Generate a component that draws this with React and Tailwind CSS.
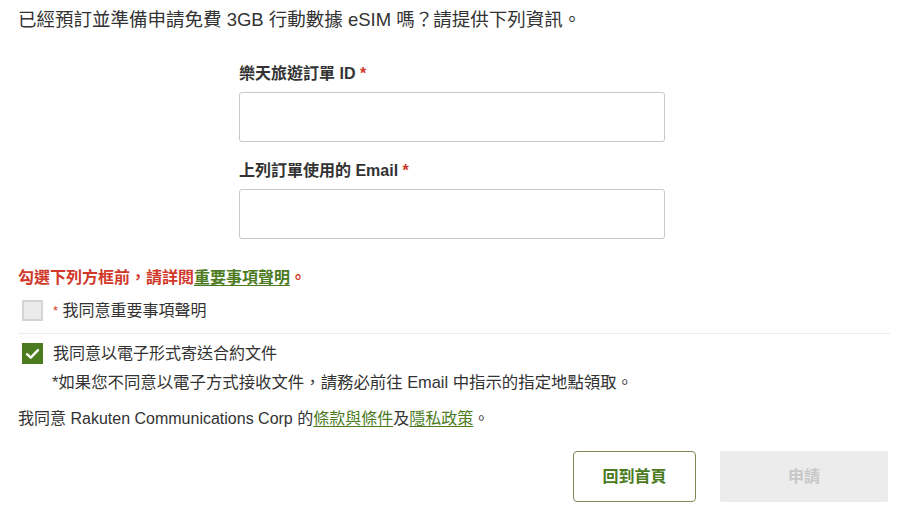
import React, { useState } from 'react'

const font = { fontFamily: '"Liberation Sans", "Noto Sans CJK TC", sans-serif' }

function Field({ label, id }) {
    return (
        <div className="mb-[19px]">
            <label htmlFor={id} className="block text-[16px] font-bold text-[#333] leading-[20px] mb-[8px]">
                {label} <span className="text-[#d0382a]">*</span>
            </label>
            <input
                id={id}
                type="text"
                className="block w-[426px] h-[50px] border border-[#c8c8c8] rounded-[3px] px-3 text-[15px] focus:outline-none"
            />
        </div>
    )
}

function Box({ checked, onClick }) {
    return (
        <button
            onClick={onClick}
            className={
                checked
                    ? 'w-[21px] h-[21px] shrink-0 bg-[#4c7b1f] flex items-center justify-center'
                    : 'w-[21px] h-[21px] shrink-0 bg-[#ebebeb] border-2 border-[#d4d4d4]'
            }
        >
            {checked && (
                <svg width="15" height="12" viewBox="0 0 15 12">
                    <path d="M2 6.2 L5.7 9.6 L13 2.2" fill="none" stroke="#fff" strokeWidth="2.4" strokeLinecap="round" strokeLinejoin="round" />
                </svg>
            )}
        </button>
    )
}

export default function App() {
    const [agree1, setAgree1] = useState(false)
    const [agree2, setAgree2] = useState(true)

    return (
        <div className="w-[900px] h-[510px] bg-white text-[#333] pl-[18px] pr-[12px] pt-[8px]" style={font}>
            <p className="text-[18.5px] leading-[24px]">
                已經預訂並準備申請免費 3GB 行動數據 eSIM 嗎？請提供下列資訊。
            </p>

            <div className="pl-[221px] pt-[32px]">
                <Field label="樂天旅遊訂單 ID" id="orderId" />
                <Field label="上列訂單使用的 Email" id="email" />
            </div>

            {/* margin collapses with the field's mb */}
            <p className="text-[16px] font-bold text-[#d0382a] leading-[20px] mt-[29px]">
                勾選下列方框前，請詳閱<a href="#" className="text-[#4c7b1f] underline underline-offset-2">重要事項聲明</a>。
            </p>

            <div className="flex items-center gap-[10px] pl-[4px] mt-[12px] pb-[12px] border-b border-[#ececec] mr-[-2px]">
                <Box checked={agree1} onClick={() => setAgree1(!agree1)} />
                <span className="text-[16px] leading-[20px]">
                    <span className="text-[#d0382a] text-[13px] align-top">*</span> 我同意重要事項聲明
                </span>
            </div>

            <div className="pl-[4px] pt-[9px]">
                <div className="flex items-center gap-[10px]">
                    <Box checked={agree2} onClick={() => setAgree2(!agree2)} />
                    <span className="text-[16px] leading-[20px]">我同意以電子形式寄送合約文件</span>
                </div>
                <p className="pl-[30px] mt-[8px] text-[16.4px] leading-[20px]">
                    *如果您不同意以電子方式接收文件，請務必前往 Email 中指示的指定地點領取。
                </p>
            </div>

            <p className="text-[16px] leading-[20px] mt-[17px]">
                我同意 Rakuten Communications Corp 的<a href="#" className="text-[#4c7b1f] underline underline-offset-2">條款與條件</a>及<a href="#" className="text-[#4c7b1f] underline underline-offset-2">隱私政策</a>。
            </p>

            <div className="flex justify-end gap-[24px] mt-[22px]">
                <button className="w-[123px] h-[51px] border border-[#7d8a55] rounded-[4px] text-[#4c7b1f] text-[16px] font-bold">
                    回到首頁
                </button>
                <button disabled className="w-[168px] h-[51px] bg-[#ececec] rounded-[2px] text-[#c8c8c8] text-[16px] font-bold">
                    申請
                </button>
            </div>
        </div>
    )
}
